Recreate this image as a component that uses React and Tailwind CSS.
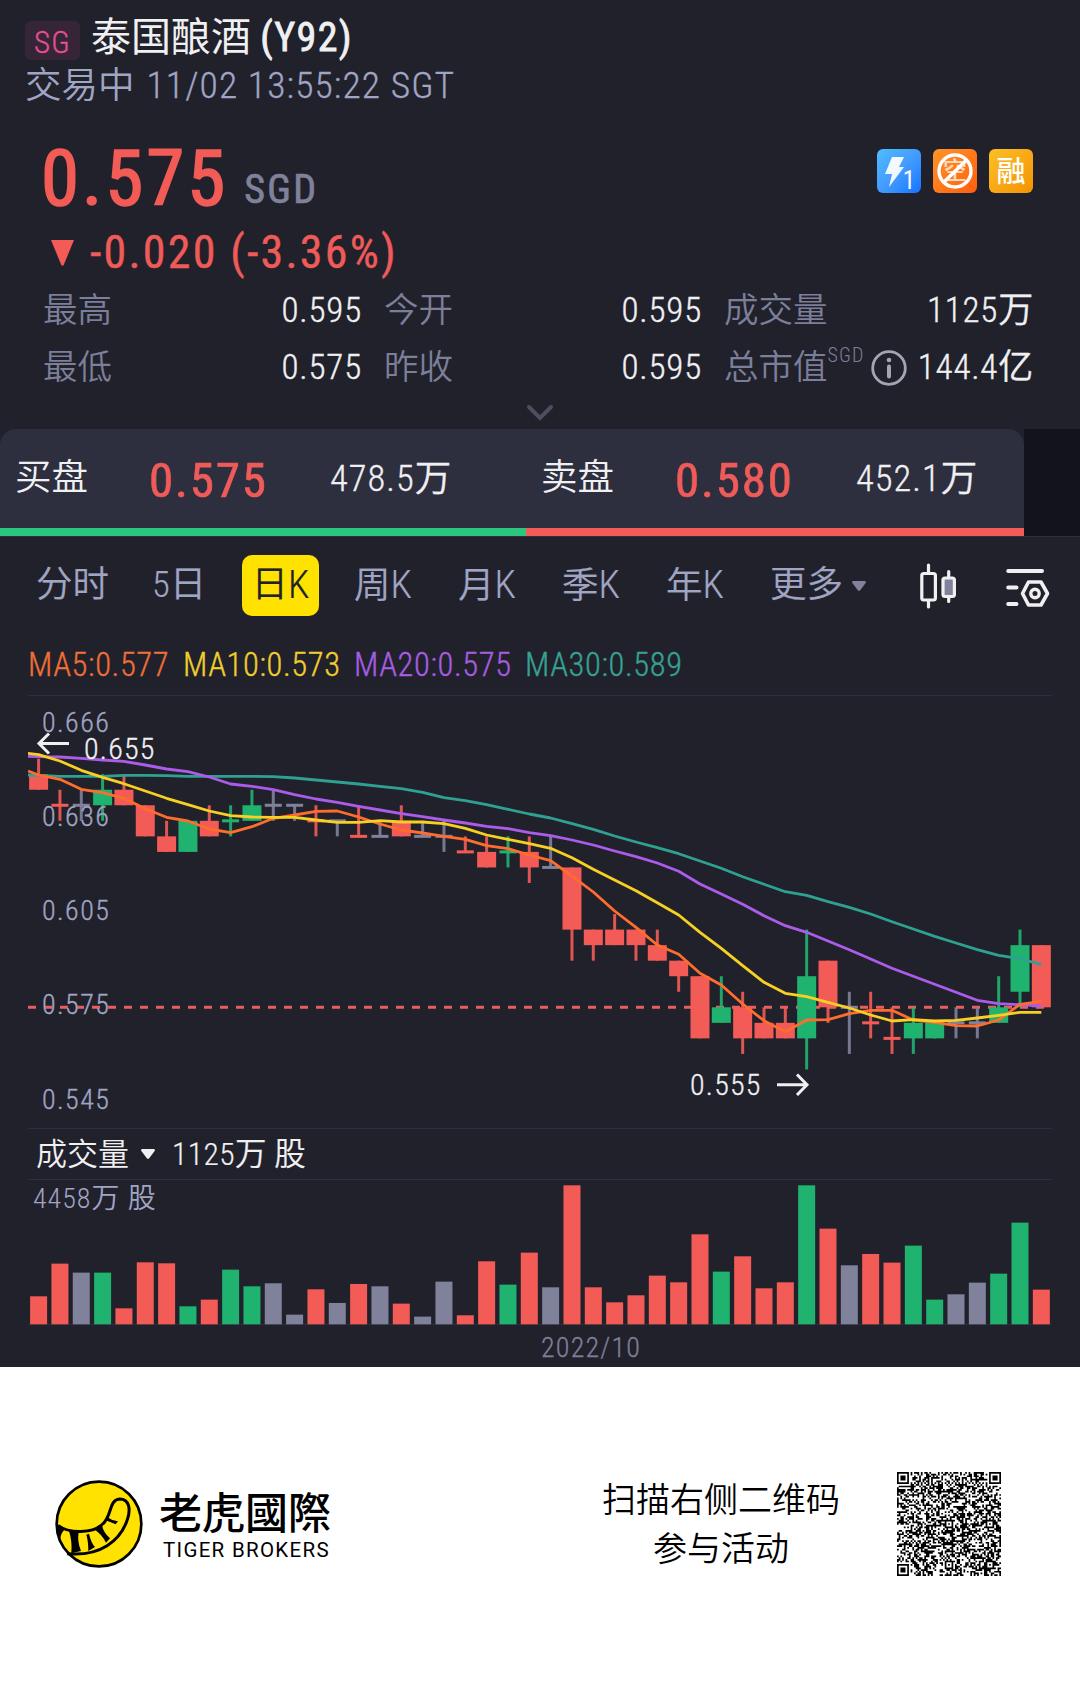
import React from 'react';

const COLORS = { r: '#f35b57', g: '#20b26f', n: '#80829c' };

// [type, open, high, low, close, volume], prices counted in 0.005 ticks from 0.575
const CANDLES = [
  ['r', 15, 16, 14, 14, 84], ['r', 13, 14, 12, 13, 182], ['n', 13, 14, 12, 13, 155], ['g', 13, 15, 12, 14, 155],
  ['r', 14, 15, 13, 13, 48], ['r', 13, 13, 11, 11, 186], ['r', 11, 12, 10, 10, 183], ['g', 10, 12, 10, 12, 54],
  ['r', 12, 13, 11, 11, 74], ['g', 12, 13, 11, 12, 164], ['g', 12, 14, 12, 13, 114], ['n', 13, 14, 12, 13, 123],
  ['n', 13, 13, 12, 13, 29], ['r', 12, 13, 11, 12, 105], ['n', 12, 12, 11, 12, 64], ['r', 11, 13, 11, 11, 121],
  ['n', 11, 12, 11, 11, 114], ['r', 12, 13, 11, 11, 62], ['n', 11, 12, 11, 11, 23], ['n', 11, 12, 10, 11, 128],
  ['r', 10, 11, 10, 10, 27], ['r', 10, 11, 9, 9, 189], ['g', 10, 11, 9, 10, 119], ['r', 10, 11, 8, 9, 215],
  ['n', 9, 11, 9, 9, 111], ['r', 9, 9, 3, 5, 417], ['r', 5, 5, 3, 4, 111], ['r', 5, 6, 4, 4, 66],
  ['r', 5, 5, 3, 4, 87], ['r', 4, 5, 3, 3, 146], ['r', 3, 3, 1, 2, 126], ['r', 2, 2, -2, -2, 270],
  ['g', -1, 2, -1, 0, 158], ['r', 0, 1, -3, -2, 204], ['r', -1, 0, -2, -2, 108], ['r', -1, 0, -2, -2, 126],
  ['g', -2, 5, -4, 2, 417], ['r', 3, 3, -1, 0, 287], ['n', 0, 1, -3, 0, 177], ['r', -1, 1, -2, -1, 211],
  ['r', -2, 0, -3, -2, 185], ['g', -2, 0, -3, -1, 236], ['g', -2, -1, -2, -1, 74], ['n', -1, 0, -2, -1, 90],
  ['n', -1, 0, -2, -1, 125], ['g', -1, 2, -1, 0, 152], ['g', 1, 5, 0, 4, 305], ['r', 4, 4, 0, 0, 104]
];

// moving averages, first point sits on the left edge of the plot
const LINES = [
  {
    color: '#2fa192',
    pts: [775, 775.3, 776.3, 776.3, 776.3, 775.3, 775.3, 775.7, 776.3, 776.3, 776.3, 776.3, 776.7, 778, 780, 782, 784, 786.3, 788.7, 792.3, 797.7, 800.7, 804.7, 809.3, 814, 818, 823.7, 829.3, 836, 842, 847.7, 853.7, 861, 868.3, 876.7, 884.3, 891.7, 895.3, 901.7, 907.3, 914, 921.7, 929, 936.3, 943, 949.7, 955.3, 958.7, 964.7]
  },
  {
    color: '#ab5cea',
    pts: [756.3, 756.7, 757, 758.3, 760, 761.3, 765, 769, 771.7, 777, 784, 786.3, 789.7, 794.7, 799, 802.3, 806.3, 810, 813.7, 816.7, 820, 823, 826.3, 828.7, 832.7, 835.7, 840, 845, 851, 856.7, 863, 871.3, 884, 894, 904.3, 915.7, 925.7, 932.3, 941, 949.7, 959, 968.3, 976.3, 984.3, 992.3, 1000.3, 1003.7, 1004.7, 1006]
  },
  {
    color: '#ff6d2e',
    pts: [771, 775, 779.3, 789.3, 792.7, 798.3, 808.7, 817.3, 821, 829, 832.7, 826.7, 818.3, 815, 811.3, 811, 817, 824, 830, 833, 836.3, 839.3, 845.7, 848.7, 855, 860.7, 876, 892, 911, 927.3, 945, 954.3, 973.3, 985, 1004, 1020.7, 1031.7, 1020, 1019.7, 1013.7, 1010.3, 1010.3, 1020, 1022.3, 1025.7, 1026, 1020, 1004.3, 1001.3]
  },
  {
    color: '#f8d021',
    pts: [753.3, 754.7, 761, 770.3, 777.3, 783.7, 791, 798.3, 804.7, 811, 815.7, 817, 817.3, 817.3, 820, 822.3, 822.3, 820.7, 822, 822, 823.7, 828.3, 835, 839.3, 843.7, 848.3, 857.7, 869.3, 880, 890.7, 902.7, 915, 932.3, 948.3, 965.7, 982.3, 993.3, 996.7, 1002.3, 1008, 1015, 1021, 1019.7, 1021, 1020.3, 1018, 1015.3, 1012.3, 1012.3]
  }
];

const cx = (i) => 38.6 + i * 21.335;
const py = (n) => 1007.3 - n * 15.54;

const linePath = (pts) =>
  pts.map((y, i) => `${i === 0 ? 'M28' : 'L' + cx(i - 1).toFixed(1)} ${y}`).join(' ');

const Candle = ({ data, i }) => {
  const [type, open, high, low, close] = data;
  const color = COLORS[type];
  const top = py(Math.max(open, close));
  const height = Math.abs(open - close) * 15.54;
  return (
    <g fill={color}>
      {high !== low && <rect x={cx(i) - 1.5} y={py(high)} width="3" height={(high - low) * 15.54} opacity="0.9" />}
      {height > 0 ? (
        <rect x={cx(i) - 9.5} y={top} width="19" height={height} />
      ) : (
        <rect x={cx(i) - 8.5} y={top - 1.5} width="17" height="3" />
      )}
    </g>
  );
};

const AXIS = [
  ['0.666', 722], ['0.636', 816], ['0.605', 910], ['0.575', 1004], ['0.545', 1099]
];

const PriceChart = () => (
  <svg viewBox="28 696 1024 432" className="block w-[1024px] h-[432px] font-light">
    <path d="M28 1007.3H1052" stroke="#e5605f" strokeWidth="3" strokeDasharray="8 8" />
    {CANDLES.map((c, i) => <Candle key={i} data={c} i={i} />)}
    {LINES.map((l) => (
      <path key={l.color} d={linePath(l.pts)} fill="none" stroke={l.color} strokeWidth="2.8" strokeLinejoin="round" />
    ))}
    <g fill="#a0a5c4" stroke="#a0a5c4" strokeWidth="0.3" fontSize="28" letterSpacing="1.4">
      {AXIS.map(([t, y]) => <text key={t} x="42" y={y + 10}>{t}</text>)}
    </g>
    <g fill="#f0f0f2" stroke="#f0f0f2" strokeWidth="0.3" fontSize="30" letterSpacing="1.2">
      <text x="84" y="758.7">0.655</text>
      <text x="690" y="1095">0.555</text>
    </g>
    <g fill="none" stroke="#f0f0f2" strokeWidth="3">
      <path d="M69 743.5H39M49 733.5L39 743.5L49 753.5" />
      <path d="M777 1084.7H807M797 1074.5L807 1084.7L797 1095" />
    </g>
  </svg>
);

const VolumeChart = () => (
  <svg viewBox="28 1180 1024 145" className="absolute left-0 top-0 w-[1024px] h-[145px]">
    {CANDLES.map((c, i) => (
      <rect key={i} x={cx(i) - 8.5} y={1324.3 - c[5] / 3} width="17" height={c[5] / 3} fill={COLORS[c[0]]} />
    ))}
  </svg>
);

const Stat = ({ label, value, className, children }) => (
  <div className={`flex items-center justify-between ${className}`}>
    <span className="flex items-center text-[#7c7f99] text-[34.5px]">{label}{children}</span>
    <span className="tracking-[0.8px] -mr-px [-webkit-text-stroke:0.35px]">{value}</span>
  </div>
);

const InfoIcon = () => (
  <svg viewBox="0 0 36 36" className="w-9 h-9 ml-[6px]" fill="none" stroke="#a3a5b5">
    <circle cx="18" cy="18" r="16.3" strokeWidth="2.8" />
    <path d="M18 16.5V26.5" strokeWidth="4" strokeLinecap="round" />
    <circle cx="18" cy="10" r="2.3" fill="#a3a5b5" stroke="none" />
  </svg>
);

const Badges = () => (
  <div className="flex gap-3">
    <div className="relative w-11 h-11 rounded-md bg-linear-to-br from-[#4fbcff] via-[#449cff] to-[#0f74ff]">
      <svg viewBox="0 0 44 44" className="w-11 h-11">
        <path d="M15 8H27L22 18H27L12 38L15 25H8Z" fill="#fff" opacity="0.93" />
      </svg>
      <span className="absolute right-[6px] bottom-[1px] text-[25px] leading-[22px] font-normal text-white">1</span>
    </div>
    <div className="relative flex items-center justify-center w-11 h-11 rounded-md bg-linear-to-br from-[#ff9326] to-[#ff5d0f]">
      <span className="text-[24px] leading-none text-[#ffd9bd] font-medium">空</span>
      <svg viewBox="0 0 44 44" className="absolute inset-0 w-11 h-11" fill="none" stroke="#fff" strokeWidth="3.4">
        <circle cx="22" cy="22" r="16" />
        <path d="M33.5 11L11 33" />
      </svg>
    </div>
    <div className="flex items-center justify-center w-11 h-11 pt-[2px] rounded-md bg-linear-to-br from-[#fcc024] to-[#f49200] text-white text-[29px] leading-none font-medium">融</div>
  </div>
);

const CandleIcon = () => (
  <svg viewBox="0 0 36 46" className="w-9 h-[46px]" fill="none" stroke="#f0f0f2" strokeWidth="3.2" strokeLinecap="round">
    <path d="M8.5 2V10M8.5 38V44M28.7 8.5V14M28.7 34V38.5" />
    <rect x="1.8" y="10.5" width="13.6" height="26.5" rx="2" />
    <rect x="23" y="15" width="11.4" height="18.5" rx="2" fill="#80829c" />
  </svg>
);

const SettingsIcon = () => (
  <svg viewBox="0 0 44 40" className="w-11 h-10" fill="none" stroke="#f0f0f2" strokeWidth="4" strokeLinecap="round" strokeLinejoin="round">
    <path d="M2.2 3H36M2.2 19.5H10.5M2.2 36H10.5" />
    <path d="M22.5 14H35L41.5 25.5L35 37H22.5L16.5 25.5Z" strokeWidth="3.6" />
    <circle cx="29" cy="25.5" r="4.2" strokeWidth="3.4" />
  </svg>
);

const Down = ({ className }) => (
  <svg viewBox="0 0 14 10" className={className} fill="currentColor">
    <path d="M1 0H13Q14.5 0.5 13.6 2L8.2 9.2Q7 10.4 5.8 9.2L0.4 2Q-0.5 0.5 1 0Z" />
  </svg>
);

const Logo = () => (
  <svg viewBox="75 62 264 264" className="w-[88px] h-[88px]">
    <circle cx="207" cy="194" r="127" fill="#ffe200" stroke="#000" strokeWidth="8" />
    <path d="M84 198C115 222 190 226 222 190C246 163 238 121 269 119C300 119 301 153 293 178C272 245 210 292 112 283" fill="none" stroke="#000" strokeWidth="9" />
    <path d="M80 196L103 212Q92 222 90 242Z" />
    <path d="M117 215L146 218Q141 246 153 275L124 282Q127 245 117 215Z" />
    <path d="M169 226L177 223Q183 250 195 263L175 275Q175 245 169 226Z" />
    <path d="M194 211L216 197Q220 220 240 237L228 250Q216 225 194 211Z" />
    <path d="M230 172Q246 184 264 186L257 195Q240 188 226 183Z" />
  </svg>
);

const QR_SIZE = 61;
const inFinder = (x, y) => {
  const corners = [[0, 0], [QR_SIZE - 7, 0], [0, QR_SIZE - 7]];
  for (const [fx, fy] of corners) {
    const dx = x - fx;
    const dy = y - fy;
    if (dx >= -1 && dx <= 7 && dy >= -1 && dy <= 7) {
      const d = Math.max(Math.abs(dx - 3), Math.abs(dy - 3));
      return d === 3 || d <= 1 ? 1 : 0;
    }
  }
  return -1;
};

const qrPath = () => {
  let d = '';
  let seed = 92575;
  for (let y = 0; y < QR_SIZE; y++) {
    for (let x = 0; x < QR_SIZE; x++) {
      seed = (seed * 1103515245 + 12345) % 2147483648;
      let on = (seed >> 16) % 100 < 50;
      const f = inFinder(x, y);
      if (f >= 0) on = f === 1;
      else if (x === 6 || y === 6) on = (x + y) % 2 === 0;
      else {
        const ax = [30, 54].find((a) => Math.abs(x - a) <= 2);
        const ay = [30, 54].find((a) => Math.abs(y - a) <= 2);
        if (ax && ay) on = Math.max(Math.abs(x - ax), Math.abs(y - ay)) !== 1;
      }
      if (on) d += `M${x} ${y}h1v1h-1z`;
    }
  }
  return d;
};

const TABS = [
  ['分时', 'ml-[36px] w-[73px]'], ['5日', 'ml-[43px] w-[50px]'], ['日K', ''], ['周K', 'ml-[35px] w-[61px]'],
  ['月K', 'ml-[43px] w-[61px]'], ['季K', 'ml-[43px] w-[61px]'], ['年K', 'ml-[43px] w-[61px]']
];

const Quote = ({ side, price, amount, className }) => (
  <div className={`flex items-center h-[99px] ${className}`}>
    <span className="w-[134px] text-[36.5px]">{side}</span>
    <span className="w-[181px] pt-[3px] text-[49px] font-normal text-[#ee5b59] tracking-[1.8px] [-webkit-text-stroke:0.7px]">{price}</span>
    <span className="text-[36.5px] tracking-[1px] pt-px [-webkit-text-stroke:0.3px]">{amount}</span>
  </div>
);

export default function App() {
  return (
    <div className="w-[1080px] h-[1683px] bg-white leading-none whitespace-nowrap font-['Roboto_Condensed','Noto_Sans_CJK_SC',sans-serif] font-[350]">
      <div className="h-[1367px] bg-[#21212b] text-[#f0f0f2]">
        {/* Title */}
        <div className="h-[139px] pl-[25px] pt-[6px]">
          <div className="flex items-center h-[61px]">
            <span className="flex items-center justify-center w-[55px] h-[39px] mt-[8px] pt-[4px] rounded-md bg-[#352536] text-[#e2518f] text-[31px] tracking-[1.2px] [-webkit-text-stroke:0.3px]">SG</span>
            <span className="ml-[11px] pt-[2px] text-[40px] font-normal">泰国酿酒 <span className="tracking-[1.4px] [-webkit-text-stroke:0.8px]">(Y92)</span></span>
          </div>
          <div className="flex items-center h-[37px] pt-px text-[36.5px] text-[#a0a5c4]">
            交易中<span className="ml-[12px] text-[37.5px] tracking-[1.1px] [-webkit-text-stroke:0.3px]">11/02 13:55:22 SGT</span>
          </div>
        </div>

        {/* Price */}
        <div className="flex justify-between h-[80px] pl-[41px] pr-[47px]">
          <div className="flex items-center h-[80px] pt-px">
            <span className="text-[77px] font-normal text-[#f35b57] tracking-[3px] [-webkit-text-stroke:1.6px]">0.575</span>
            <span className="ml-4 mt-[21px] text-[40px] font-normal text-[#80829c] tracking-[2.2px] [-webkit-text-stroke:0.7px]">SGD</span>
          </div>
          <div className="pt-[10px]"><Badges /></div>
        </div>
        <div className="flex items-center h-[62px] pl-[51px] text-[#ee5b59]">
          <svg viewBox="0 0 23 26" className="w-[23px] h-[26px] mt-[6px]"><path d="M0 0H23L12.5 25.5H10.5Z" fill="#f35b57" /></svg>
          <span className="ml-[16px] pt-[3px] text-[46px] font-normal tracking-[2.2px] [-webkit-text-stroke:0.4px]">-0.020 (-3.36%)</span>
        </div>

        {/* Stats */}
        <div className="h-[148px] pl-[43px] pr-[47px] pt-px text-[35px]">
          <div className="flex items-center h-[57px] gap-[23px]">
            <Stat label="最高" value="0.595" className="w-[318px]" />
            <Stat label="今开" value="0.595" className="w-[317px]" />
            <Stat label="成交量" value="1125万" className="flex-1" />
          </div>
          <div className="flex items-center h-[57px] gap-[23px]">
            <Stat label="最低" value="0.575" className="w-[318px]" />
            <Stat label="昨收" value="0.595" className="w-[317px]" />
            <Stat label="总市值" value="144.4亿" className="flex-1">
              <span className="text-[20px] mb-[26px] tracking-[1.2px]">SGD</span>
              <InfoIcon />
            </Stat>
          </div>
          <svg viewBox="0 0 28 17" className="w-7 h-[17px] ml-[483px] mt-[8px]" fill="none" stroke="#4d4f60" strokeWidth="4" strokeLinecap="round">
            <path d="M3 3L14 14L25 3" />
          </svg>
        </div>

        {/* Bid / ask */}
        <div className="h-[108px] border-b border-[#2e2f3c] flex">
          <div className="w-[1024px]">
            <div className="flex rounded-t-2xl bg-[#2d2e3e]">
              <Quote side="买盘" price="0.575" amount="478.5万" className="w-[526px] pl-[15px]" />
              <Quote side="卖盘" price="0.580" amount="452.1万" className="flex-1 pl-[15px]" />
            </div>
            <div className="flex h-2">
              <div className="w-[526px] bg-[#2bc77e]" />
              <div className="flex-1 bg-[#f35b57]" />
            </div>
          </div>
          <div className="flex-1 bg-[#13131c]" />
        </div>

        {/* Period tabs */}
        <div className="flex items-center h-[97px] text-[36.5px] text-[#a0a5c4] [-webkit-text-stroke:0.2px]">
          {TABS.map(([label, cls]) =>
            label === '日K' ? (
              <span key={label} className="flex items-center justify-center ml-[40px] w-[77px] h-[61px] rounded-[10px] bg-[#ffe200] text-[#21212b]">日<span className="text-[39px]">K</span></span>
            ) : (
              <span key={label} className={cls}>{label.replace('K', '')}{label.endsWith('K') && <span className="text-[39px]">K</span>}</span>
            )
          )}
          <span className="ml-[43px] w-[82px]">更多</span>
          <Down className="w-[14px] h-[10px] text-[#80829c]" />
          <div className="ml-[54px]"><CandleIcon /></div>
          <div className="ml-[50px] mt-1"><SettingsIcon /></div>
        </div>

        {/* Moving averages */}
        <div className="flex items-center h-[62px] mx-7 pt-px border-b border-[#2e2f3c] text-[32.5px] tracking-[0.6px] [-webkit-text-stroke:0.35px]">
          <span className="w-[155px] text-[#ee6f37]">MA5:0.577</span>
          <span className="w-[171px] text-[#f0ce2d]">MA10:0.573</span>
          <span className="w-[171px] text-[#a65de0]">MA20:0.575</span>
          <span className="text-[#36a192]">MA30:0.589</span>
        </div>

        <div className="mx-7"><PriceChart /></div>

        {/* Volume */}
        <div className="mx-7 h-[52px] flex items-center border-y border-[#2e2f3c] pl-2">
          <span className="w-[105px] pt-px text-[31px]">成交量</span>
          <Down className="w-[14px] h-[10px]" />
          <span className="ml-[17px] pt-px text-[31.5px] tracking-[0.4px] [-webkit-text-stroke:0.2px]">1125万 股</span>
        </div>
        <div className="relative mx-7 h-[145px] border-b border-[#2e2f3c]">
          <VolumeChart />
          <div className="relative pl-[5px] pt-[5px] text-[28px] text-[#a0a5c4] tracking-[1px]">4458万 股</div>
        </div>
        <div className="h-[41px] pl-[541px] pt-[9px] text-[28px] text-[#7c7f97] tracking-[1.2px] [-webkit-text-stroke:0.3px]">2022/10</div>
      </div>

      {/* Share footer */}
      <div className="flex h-[316px] text-black">
        <div className="pl-[55px] pt-[113px]"><Logo /></div>
        <div className="ml-4 pt-[120px] w-[430px]">
          <div className="text-[43px] leading-[46px] font-medium font-['Noto_Sans_CJK_TC',sans-serif]">老虎國際</div>
          <div className="pl-1 mt-[5px] text-[20.5px] leading-6 font-normal font-['Roboto',sans-serif] tracking-[1.3px]">TIGER BROKERS</div>
        </div>
        <div className="w-[264px] pt-[109px] text-center text-[34px] leading-[49px]">
          <div>扫描右侧二维码</div>
          <div>参与活动</div>
        </div>
        <svg viewBox="0 0 61 61" className="w-[104px] h-[104px] ml-[44px] mt-[105px]"><path d={qrPath()} /></svg>
      </div>
    </div>
  );
}
